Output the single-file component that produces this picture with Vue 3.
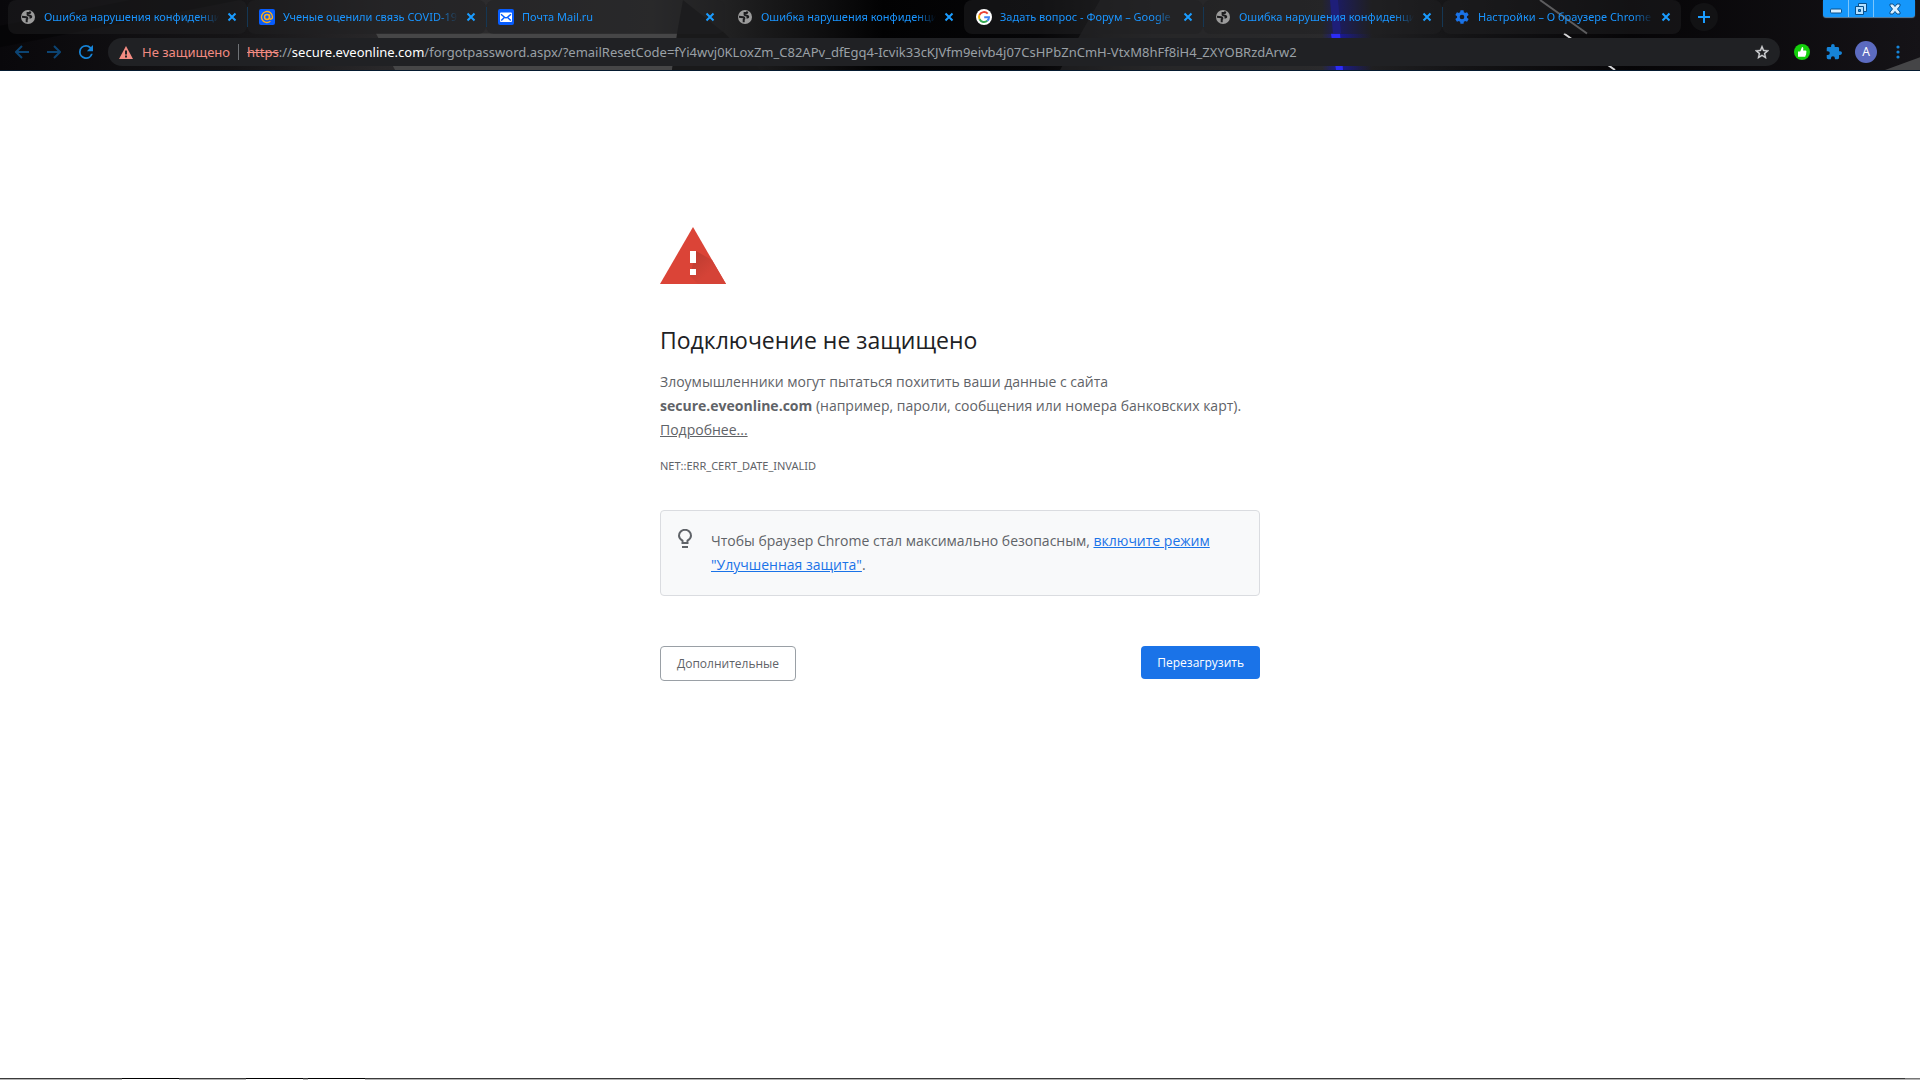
<template>
  <div class="browser">
    <header class="chrome">
      <svg class="theme" viewBox="0 0 1920 71" preserveAspectRatio="none" aria-hidden="true">
        <defs>
          <linearGradient id="frame">
            <stop offset="0" stop-color="#09080b" />
            <stop offset="0.12" stop-color="#151416" />
            <stop offset="0.2" stop-color="#29282a" />
            <stop offset="0.34" stop-color="#323233" />
            <stop offset="0.38" stop-color="#202021" />
            <stop offset="0.46" stop-color="#020203" />
            <stop offset="0.54" stop-color="#060608" />
            <stop offset="0.6" stop-color="#1e1e1f" />
            <stop offset="0.69" stop-color="#252527" />
            <stop offset="0.76" stop-color="#141416" />
            <stop offset="0.85" stop-color="#060507" />
            <stop offset="1" stop-color="#151317" />
          </linearGradient>
          <linearGradient id="glow">
            <stop offset="0" stop-color="#1414c8" stop-opacity="0" />
            <stop offset="0.35" stop-color="#1414c8" stop-opacity="0.7" />
            <stop offset="1" stop-color="#1414a0" stop-opacity="0" />
          </linearGradient>
        </defs>
        <rect width="1920" height="71" fill="url(#frame)" />
        <polygon points="0,48 240,0 130,0 0,26" fill="#000" opacity="0.35" />
        <polygon points="376,34 678,34 672,71 395,71" fill="#464647" />
        <polygon points="683,0 725,34 760,71 672,71 677,34" fill="#19191a" />
        <polygon points="1100,0 1330,0 1340,71 1060,71" fill="#303032" opacity="0.45" />
        <rect x="1322" width="50" height="71" fill="url(#glow)" />
        <polygon points="1330,0 1338,0 1341,34 1333,34" fill="#1c1cd0" />
        <polygon points="1331,34 1340,34 1343,71 1336,71" fill="#2c2cf5" />
        <path d="M1540 0 1587 34" stroke="#9a9a9c" stroke-width="2" />
        <path d="M1564 34 1615 71" stroke="#d5d5d7" stroke-width="2" />
        <polygon points="1885,71 1920,58 1920,71" fill="#454547" />
      </svg>

      <div class="tab-row">
        <nav class="tabs" aria-label="Вкладки">
          <div
            v-for="(tab, index) in tabs"
            :key="index"
            class="tab"
            :class="{ active: index === 3, divided: ![2, 3, 6].includes(index) }"
          >
            <svg v-if="tab.icon === 'globe'" class="favicon" viewBox="0 0 16 16">
              <circle cx="8" cy="8" r="7" fill="#9b9b9b" />
              <path
                d="M10.500 2.500 9.800 4H7.600v1.800c.6 1 3.400.3 3.600 1.700.1.900-.8 1.200-1.700 1.100M2 7.800l4.200.5c1.400.3 1.500 1.300.5 2.200v2.800"
                fill="none"
                stroke="#1c1c1e"
                stroke-width="2"
              />
            </svg>
            <svg v-else-if="tab.icon === 'at'" class="favicon" viewBox="0 0 16 16">
              <rect width="16" height="16" rx="2" fill="#075dff" />
              <circle cx="8" cy="8" r="2.5" fill="none" stroke="#ffae16" stroke-width="1.5" />
              <path
                d="M10.5 5.5v3.1c0 2.3 3 2.1 3-.6a5.5 5.5 0 1 0-2.1 4.3"
                fill="none"
                stroke="#ffae16"
                stroke-width="1.4"
              />
            </svg>
            <svg v-else-if="tab.icon === 'mail'" class="favicon" viewBox="0 0 16 16">
              <rect width="16" height="16" rx="2" fill="#075dff" />
              <rect x="2" y="3.5" width="12" height="9.5" rx="1" fill="#fff" />
              <path
                d="M3 5.2 6.2 8Q8 9.6 9.8 8L13 5.2M3.2 11.5l2.9-2.8M12.8 11.5 9.9 8.7"
                fill="none"
                stroke="#075dff"
                stroke-width="1.5"
              />
            </svg>
            <svg v-else-if="tab.icon === 'google'" class="favicon" viewBox="0 0 16 16">
              <circle cx="8" cy="8" r="8" fill="#fff" />
              <g fill="none" stroke-width="2">
                <path d="M11.7 4.7A5 5 0 0 0 3.5 5.9" stroke="#ea4335" />
                <path d="M3.5 5.9a5 5 0 0 0 .1 4.4" stroke="#fbbc05" />
                <path d="M3.6 10.3a5 5 0 0 0 7.7 1.5" stroke="#34a853" />
                <path d="M11.3 11.8A5 5 0 0 0 13 8.2H8.2" stroke="#4285f4" />
              </g>
            </svg>
            <svg v-else class="favicon" viewBox="0 0 24 24">
              <path :d="gearPath" fill="#1a73e8" />
            </svg>
            <button class="tab-title">{{ tab.title }}</button>
            <button class="tab-close" aria-label="Закрыть вкладку">
              <svg viewBox="0 0 10 10"><path d="m1.5 1.5 7 7m0-7-7 7" /></svg>
            </button>
          </div>
        </nav>
        <button class="new-tab" aria-label="Новая вкладка">
          <svg viewBox="0 0 12 12"><path d="M6 0v12M0 6h12" /></svg>
        </button>
        <div class="window-controls">
          <button aria-label="Свернуть">
            <svg class="minimize" width="12" height="6" viewBox="0 0 12 6">
              <rect x="0.5" y="1" width="11" height="4" rx="1" fill="#d8efff" stroke="#08508c" />
            </svg>
          </button>
          <button aria-label="Свернуть в окно">
            <svg width="14" height="14" viewBox="0 0 14 14">
              <g fill="#b4e0ff" stroke="#08508c">
                <path d="M4.500 1.500h8v8h-8z" />
                <path d="M1.500 4.500h8v8h-8z" />
                <path d="M4.500 7.500h2v2h-2z" fill="#1295ee" />
              </g>
            </svg>
          </button>
          <button class="wide" aria-label="Закрыть">
            <svg width="12" height="12" viewBox="0 0 12 12">
              <path
                d="M1 1h3l2 2.500L8 1h3v2L8.500 6 11 9v2H8L6 8.500 4 11H1V9l2.500-3L1 3z"
                fill="#d8efff"
                stroke="#08508c"
              />
            </svg>
          </button>
        </div>
      </div>

      <div class="toolbar">
        <button class="tool dim" aria-label="Назад">
          <svg width="14" height="14" viewBox="0 0 14 14">
            <path d="M14 7H1.500M7 1 1 7l6 6" fill="none" stroke="currentColor" stroke-width="2" />
          </svg>
        </button>
        <button class="tool dim" aria-label="Вперед">
          <svg width="14" height="14" viewBox="0 0 14 14">
            <path d="M0 7h12.500M7 1l6 6-6 6" fill="none" stroke="currentColor" stroke-width="2" />
          </svg>
        </button>
        <button class="tool" aria-label="Обновить">
          <svg width="14" height="14" viewBox="4 4 16 16">
            <path
              d="M17.650 6.350A7.960 7.960 0 0 0 12 4a8 8 0 1 0 7.730 10h-2.080A6 6 0 1 1 12 6c1.660 0 3.140.69 4.220 1.780L13 11h7V4z"
              fill="currentColor"
            />
          </svg>
        </button>

        <div class="omnibox">
          <svg width="14" height="13" viewBox="0 0 14 13">
            <path d="M7 0 14 13H0z" fill="#f28b82" />
            <path d="M7 4.500v4M7 9.500v2" stroke="#202124" stroke-width="2" />
          </svg>
          <span class="status">Не защищено</span>
          <div class="url">
            <span class="scheme">https</span>://<span class="host">secure.eveonline.com</span>{{ path }}
            <input type="text" aria-label="Адресная строка" />
          </div>
          <button aria-label="Добавить в закладки">
            <svg width="14" height="14" viewBox="2 2 20 19">
              <path
                d="m22 9.240-7.190-.62L12 2 9.190 8.630 2 9.240l5.460 4.730L5.820 21 12 17.270 18.180 21l-1.630-7.030zM12 15.400l-3.760 2.270 1-4.280-3.320-2.880 4.380-.38L12 6.100l1.710 4.040 4.380.38-3.320 2.880 1 4.280z"
                fill="#d5d7da"
                stroke="#d5d7da"
                stroke-width="0.5"
              />
            </svg>
          </button>
        </div>

        <button class="tool" aria-label="Расширение">
          <svg width="16" height="16" viewBox="0 0 16 16">
            <circle cx="8" cy="8" r="8" fill="#14cf0b" />
            <path
              d="M4 7.500h2.200L8 3c1.500 0 1.500 1.500 1.100 3.500h2.400c1 0 1.200 1 .7 1.700.4.700.2 1.300-.2 1.600.3.700 0 1.200-.4 1.500.1 1-.4 1.500-1.200 1.500H4z"
              fill="#fff"
            />
          </svg>
        </button>
        <button class="tool" aria-label="Расширения">
          <svg width="16" height="16" viewBox="1 1 22 22">
            <path
              d="M20.500 11H19V7a2 2 0 0 0-2-2h-4V3.500a2.500 2.500 0 0 0-5 0V5H4a2 2 0 0 0-2 2v3.800h1.500a2.700 2.700 0 0 1 0 5.400H2V20a2 2 0 0 0 2 2h3.800v-1.500a2.700 2.700 0 0 1 5.400 0V22H17a2 2 0 0 0 2-2v-4h1.500a2.500 2.500 0 0 0 0-5z"
              fill="currentColor"
            />
          </svg>
        </button>
        <button class="avatar" aria-label="Профиль">A</button>
        <button class="tool" aria-label="Меню">
          <svg width="4" height="14" viewBox="0 0 4 14" fill="currentColor">
            <circle cx="2" cy="2" r="1.600" />
            <circle cx="2" cy="7" r="1.600" />
            <circle cx="2" cy="12" r="1.600" />
          </svg>
        </button>
      </div>
    </header>

    <main class="page">
      <section class="warning">
        <svg width="66" height="57" viewBox="0 0 66 57">
          <defs>
            <linearGradient id="shade" x2="1" y2="1">
              <stop offset="0" stop-color="#b83a2f" />
              <stop offset="0.6" stop-color="#d54337" />
            </linearGradient>
          </defs>
          <path d="M33 0 66 57H0z" fill="#db4437" />
          <path d="M36 24 52 33 66 57H38L30 49z" fill="url(#shade)" />
          <path d="M30 24h6v12h-6zM30 42h6v6h-6z" fill="#fff" />
        </svg>
        <h1>Подключение не защищено</h1>
        <p>
          Злоумышленники могут пытаться похитить ваши данные с сайта<br />
          <strong>secure.eveonline.com</strong> (например, пароли, сообщения или номера банковских
          карт).<br />
          <a class="more" href="#">Подробнее...</a>
        </p>
        <div class="error-code">NET::ERR_CERT_DATE_INVALID</div>
        <div class="tip">
          <svg width="14" height="20" viewBox="0 0 14 20">
            <path
              d="M4.500 14v-2.300C2.500 10.500 1 8.900 1 6.800a6 6 0 0 1 12 0c0 2.100-1.500 3.700-3.500 4.900V14z"
              fill="none"
              stroke="#5f6368"
              stroke-width="2"
            />
            <path d="M4 17h6v2H4z" fill="#5f6368" />
          </svg>
          <div>
            Чтобы браузер Chrome стал максимально безопасным,
            <a href="#">включите режим<br />"Улучшенная защита"</a>.
          </div>
        </div>
        <div class="actions">
          <button class="details">Дополнительные</button>
          <button class="reload">Перезагрузить</button>
        </div>
      </section>
    </main>

    <footer class="taskbar">
      <i class="start"></i><i class="window"></i><i class="space"></i><i class="window"></i
      ><i class="gap"></i><i class="window"></i><i class="rest"></i><i class="desktop"></i>
    </footer>
  </div>
</template>

<script setup>
const tabs = [
  { icon: 'globe', title: 'Ошибка нарушения конфиденциальности' },
  { icon: 'at', title: 'Ученые оценили связь COVID-19' },
  { icon: 'mail', title: 'Почта Mail.ru' },
  { icon: 'globe', title: 'Ошибка нарушения конфиденциальности' },
  { icon: 'google', title: 'Задать вопрос - Форум – Google' },
  { icon: 'globe', title: 'Ошибка нарушения конфиденциальности' },
  { icon: 'gear', title: 'Настройки – О браузере Chrome' },
]

const path =
  '/forgotpassword.aspx/?emailResetCode=fYi4wvj0KLoxZm_C82APv_dfEgq4-Icvik33cKJVfm9eivb4j07CsHPbZnCmH-VtxM8hFf8iH4_ZXYOBRzdArw2'

const gearPath =
  'M19.4 13a7.500 7.500 0 0 0 0-2l2.600-2-2.400-4.200-3 1.200a7 7 0 0 0-1.800-1L14.300 2H9.700l-.5 3a7 7 0 0 0-1.800 1l-3-1.200L2 9l2.600 2a7.500 7.500 0 0 0 0 2L2 15l2.400 4.200 3-1.200a7 7 0 0 0 1.800 1l.5 3h4.600l.5-3a7 7 0 0 0 1.800-1l3 1.200L22 15zM12 15.500a3.500 3.500 0 1 1 0-7 3.500 3.500 0 0 1 0 7z'
</script>

<style>
body {
  margin: 0;
}
</style>

<style scoped>
.browser {
  display: flex;
  flex-direction: column;
  min-height: 100vh;
  background: #fff;
  color: #5f6368;
  font-family: 'Open Sans', 'Noto Sans', sans-serif;
}

button {
  padding: 0;
  border: 0;
  background: none;
  font-family: inherit;
  cursor: pointer;
}

svg {
  display: block;
  flex-shrink: 0;
}

.chrome {
  position: relative;
  box-sizing: border-box;
  height: 71px;
  border-bottom: 1px solid #041a30;
  background: #0a090c;
  font-family: 'Noto Sans', sans-serif;
}

.theme {
  position: absolute;
  inset: 0;
  width: 100%;
  height: 100%;
}

.tab-row {
  position: relative;
  display: flex;
  align-items: flex-start;
  height: 34px;
  padding-left: 8px;
}

.tabs {
  display: flex;
  flex: 0 1 1673px;
  min-width: 0;
}

.tab {
  position: relative;
  display: flex;
  flex: 1;
  align-items: center;
  box-sizing: border-box;
  min-width: 0;
  height: 34px;
  padding: 0 10px 0 12px;
  border-radius: 8px;
  background: rgba(32, 32, 34, 0.5);
}

.tab.active {
  background: none;
}

.tab.divided::after {
  content: '';
  position: absolute;
  top: 7px;
  right: -1px;
  width: 1px;
  height: 20px;
  background: #0a4f87;
}

.favicon {
  width: 16px;
  height: 16px;
}

.tab-title {
  flex: 1;
  min-width: 0;
  margin: 0 8px;
  overflow: hidden;
  color: #1a95ff;
  font-size: 11px;
  line-height: 18px;
  text-align: left;
  white-space: nowrap;
  mask-image: linear-gradient(to right, #000 calc(100% - 20px), transparent);
}

.tab-close svg {
  width: 10px;
  height: 10px;
  fill: none;
  stroke: #1a9cff;
  stroke-width: 2;
}

.new-tab {
  display: flex;
  align-items: center;
  justify-content: center;
  width: 28px;
  height: 28px;
  margin: 3px 0 0 9px;
  border-radius: 50%;
  background: #121214;
}

.new-tab svg {
  width: 12px;
  height: 12px;
  stroke: #1a9cff;
  stroke-width: 2;
}

.window-controls {
  display: flex;
  height: 17px;
  margin: 0 5px 0 auto;
  border-radius: 0 0 3px 3px;
  background: #1597fb;
  box-shadow: 0 1px 1px #5d86a8;
}

.window-controls button {
  display: flex;
  align-items: center;
  justify-content: center;
  width: 25px;
}

.window-controls button + button {
  border-left: 1px solid #7cc6fc;
}

.window-controls .wide {
  width: 42px;
}

.window-controls .minimize {
  margin-top: 4px;
}

.toolbar {
  position: relative;
  display: flex;
  align-items: center;
  gap: 4px;
  height: 28px;
  padding: 4px 8px;
}

.tool {
  display: flex;
  align-items: center;
  justify-content: center;
  width: 28px;
  height: 28px;
  color: #1684d8;
}

.tool.dim {
  color: #0c4473;
}

.omnibox {
  display: flex;
  flex: 1;
  align-items: center;
  box-sizing: border-box;
  min-width: 0;
  height: 28px;
  margin: 0 4px;
  padding: 0 11px;
  border-radius: 14px;
  background: #202124;
  font-size: 13px;
  line-height: 20px;
  white-space: nowrap;
}

.status {
  margin-left: 9px;
  padding-right: 8px;
  color: #f28b82;
}

.url {
  position: relative;
  flex: 1;
  min-width: 0;
  padding-left: 9px;
  overflow: hidden;
  color: #9aa0a6;
}

.url::before {
  content: '';
  position: absolute;
  top: 2px;
  left: 0;
  width: 1px;
  height: 16px;
  background: #6f7276;
}

.url input {
  position: absolute;
  inset: 0;
  width: 100%;
  padding: 0 0 0 9px;
  border: 0;
  outline: 0;
  background: none;
  color: inherit;
  font: inherit;
}

.scheme {
  color: #f28b82;
  text-decoration: line-through;
}

.host {
  color: #fff;
}

.avatar {
  width: 22px;
  height: 22px;
  margin: 0 3px;
  border-radius: 50%;
  background: #5c6bc0;
  color: #fff;
  font-size: 12px;
  line-height: 22px;
}

.page {
  flex: 1;
  padding: 156px 24px 0;
}

.warning {
  max-width: 600px;
  margin: 0 auto;
  font-size: 14px;
  line-height: 24px;
}

h1 {
  margin: 40px 0 14px;
  color: #202124;
  font-size: 23px;
  font-weight: 400;
  line-height: 32px;
}

p {
  margin: 0;
}

.more {
  color: #5f6368;
}

.error-code {
  margin: 12px 0 32px;
  font-family: 'Noto Sans', sans-serif;
  font-size: 11px;
}

.tip {
  display: flex;
  gap: 19px;
  box-sizing: border-box;
  height: 86px;
  padding: 18px 17px;
  border: 1px solid #dadce0;
  border-radius: 4px;
  background: #f8f9fa;
}

.tip a {
  color: #1a73e8;
}

.actions {
  display: flex;
  align-items: flex-start;
  justify-content: space-between;
  margin-top: 50px;
}

.actions button {
  box-sizing: border-box;
  padding: 0 16px;
  border-radius: 4px;
  font-size: 12px;
}

.actions .details {
  height: 35px;
  border: 1px solid #9aa0a6;
  color: #5f6368;
}

.actions .reload {
  height: 33px;
  background: #1a73e8;
  color: #fff;
}

.taskbar {
  display: flex;
  height: 2px;
}

.taskbar i {
  box-sizing: border-box;
  border-top: 1px solid #3a3a3a;
  background: #b5b5b5;
}

.taskbar .start {
  width: 122px;
}

.taskbar .window {
  width: 57px;
  border-color: #000;
  background: #fff;
}

.taskbar .space {
  width: 67px;
}

.taskbar .gap {
  width: 5px;
}

.taskbar .rest {
  flex: 1;
}

.taskbar .desktop {
  width: 15px;
  border-color: #777;
}
</style>
